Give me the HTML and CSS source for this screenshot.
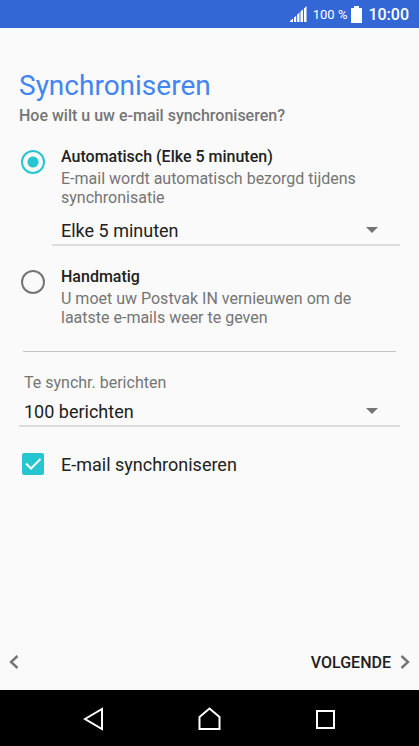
FILE: index.html
```html
<!DOCTYPE html>
<html lang="nl">
<head>
  <meta charset="UTF-8">
  <meta name="viewport" content="width=device-width, initial-scale=1">
  <title>Synchroniseren</title>
  <link rel="stylesheet" href="styles.css">
</head>
<body>
  <div class="status-bar">
    <svg class="signal" width="17" height="16" viewBox="0 0 17 16" fill="#fff">
      <path d="M0 16v-1l3-2.500v3.500zM4 16v-4.300l2.200-2.200v6.500zM7.200 16v-7.400l2.300-2.200v9.600zM10.500 16v-10.500l2.500-2.200v12.700zM14 16v-13.500l2.500-2.500v16z"/>
    </svg>
    <span class="battery-level">100 %</span>
    <svg class="battery" width="11" height="17" viewBox="0 0 11 17" fill="#fff">
      <path d="M3 0h5v2h3v15H0V2h3z"/>
    </svg>
    <span class="clock">10:00</span>
  </div>

  <form class="screen" id="syncForm">
    <main class="content">
      <h1>Synchroniseren</h1>
      <p class="subtitle">Hoe wilt u uw e-mail synchroniseren?</p>

      <div class="option">
        <input type="radio" id="auto" name="mode" value="auto" checked>
        <label for="auto">
          <strong>Automatisch (Elke 5 minuten)</strong>
          <span>E-mail wordt automatisch bezorgd tijdens synchronisatie</span>
        </label>
      </div>

      <div class="select interval">
        <select id="interval" aria-label="Interval">
          <option>Elke 5 minuten</option>
        </select>
      </div>

      <div class="option">
        <input type="radio" id="manual" name="mode" value="manual">
        <label for="manual">
          <strong>Handmatig</strong>
          <span>U moet uw Postvak IN vernieuwen om de laatste e-mails weer te geven</span>
        </label>
      </div>

      <hr>

      <label class="field-label" for="amount">Te synchr. berichten</label>
      <div class="select amount">
        <select id="amount">
          <option>100 berichten</option>
        </select>
      </div>

      <div class="check">
        <input type="checkbox" id="syncMail" checked>
        <label for="syncMail">E-mail synchroniseren</label>
      </div>
    </main>

    <footer class="actions">
      <button type="button" class="back" aria-label="Vorige">
        <svg width="10" height="14" viewBox="0 0 10 14" fill="none" stroke="#757575" stroke-width="2.400">
          <path d="M8.500 1L2 7l6.500 6"/>
        </svg>
      </button>
      <button type="submit" class="next">
        Volgende
        <svg width="10" height="14" viewBox="0 0 10 14" fill="none" stroke="#757575" stroke-width="2.400">
          <path d="M1.500 1L8 7l-6.500 6"/>
        </svg>
      </button>
    </footer>
  </form>

  <nav class="nav-bar">
    <button type="button" aria-label="Terug">
      <svg width="24" height="24" viewBox="0 0 24 24" fill="none" stroke="#fff" stroke-width="2">
        <path d="M3 12L20 2v20z"/>
      </svg>
    </button>
    <button type="button" aria-label="Start">
      <svg width="24" height="24" viewBox="0 0 24 24" fill="none" stroke="#fff" stroke-width="2">
        <path d="M1.500 22V10l10-8.500 10 8.500v12z"/>
      </svg>
    </button>
    <button type="button" aria-label="Recente apps">
      <svg width="24" height="24" viewBox="0 0 24 24" fill="none" stroke="#fff" stroke-width="2">
        <rect x="3" y="4" width="17" height="17"/>
      </svg>
    </button>
  </nav>
</body>
</html>
```
FILE: styles.css
```css
* { box-sizing: border-box; }
body {
  margin: 0;
  min-height: 100vh;
  display: flex;
  flex-direction: column;
  font-family: Roboto, sans-serif;
  font-size: 16px;
  background-color: #fafafa;
  color: #212121;
}
button {
  display: flex;
  align-items: center;
  padding: 0;
  border: none;
  background: none;
  font: inherit;
  color: inherit;
  cursor: pointer;
}
.status-bar {
  display: flex;
  align-items: center;
  justify-content: flex-end;
  height: 28px;
  padding-right: 10px;
  background-color: #3367d6;
  color: white;
}
.battery-level {
  margin: 0 4px 0 6px;
  font-size: 13px;
}
.clock {
  margin-left: 6px;
  font-size: 16px;
  font-weight: 500;
}
.screen {
  flex: 1;
  display: flex;
  flex-direction: column;
}
.content {
  flex: 1;
  padding: 42px 19px 0;
}
h1 {
  margin: 0;
  font-size: 28px;
  font-weight: 400;
  line-height: 32px;
  color: #4285f4;
}
.subtitle {
  margin: 4px 0 21px;
  font-weight: 500;
  line-height: 20px;
  color: #757575;
}
.option {
  display: flex;
  align-items: flex-start;
  gap: 16px;
  padding: 0 30px 0 2px;
}
.option strong,
.option span {
  display: block;
}
.option strong {
  margin-bottom: 2px;
  font-weight: 500;
  line-height: 20px;
}
.option span {
  line-height: 19px;
  color: #757575;
}
input[type="radio"] {
  appearance: none;
  flex: none;
  width: 24px;
  height: 24px;
  margin: 3px 0 0;
  border: 2px solid #757575;
  border-radius: 50%;
}
input[type="radio"]:checked {
  border-color: #26c6d0;
  background: radial-gradient(circle, #26c6d0 5px, transparent 6px);
}
.select {
  position: relative;
  border-bottom: 2px solid #dcdcdc;
}
.select::after {
  content: "";
  position: absolute;
  right: 22px;
  top: 11px;
  border: 6px solid transparent;
  border-top-color: #757575;
  border-bottom: none;
  pointer-events: none;
}
.select select {
  appearance: none;
  display: block;
  width: 100%;
  height: 28px;
  border: none;
  background: none;
  font-family: inherit;
  font-size: 18px;
  color: inherit;
}
.interval {
  margin: 9px 0 21px 33px;
}
.interval select {
  padding: 0 9px;
}
.amount select {
  padding: 0 5px;
}
hr {
  height: 1px;
  margin: 24px 4px 21px;
  border: none;
  background-color: #c4c4c4;
}
.field-label {
  display: block;
  margin: 0 5px 4px;
  line-height: 20px;
  color: #757575;
}
.check {
  display: flex;
  align-items: center;
  gap: 17px;
  margin-top: 26px;
  padding-left: 3px;
  font-size: 18px;
}
input[type="checkbox"] {
  appearance: none;
  flex: none;
  width: 22px;
  height: 22px;
  margin: 0;
  border: 2px solid #757575;
  border-radius: 2px;
}
input[type="checkbox"]:checked {
  border: none;
  background: #26c6d0 url("data:image/svg+xml,%3Csvg xmlns='http://www.w3.org/2000/svg' viewBox='0 0 22 22' fill='none' stroke='white' stroke-width='2'%3E%3Cpath d='M4 10.500l5 5L18.500 6'/%3E%3C/svg%3E");
}
.actions {
  display: flex;
  justify-content: space-between;
  align-items: center;
  height: 56px;
  padding: 0 9px;
}
.next {
  gap: 9px;
  font-weight: 500;
  text-transform: uppercase;
}
.nav-bar {
  display: flex;
  justify-content: center;
  align-items: center;
  gap: 92px;
  height: 56px;
  padding-top: 2px;
  background-color: black;
}
```
